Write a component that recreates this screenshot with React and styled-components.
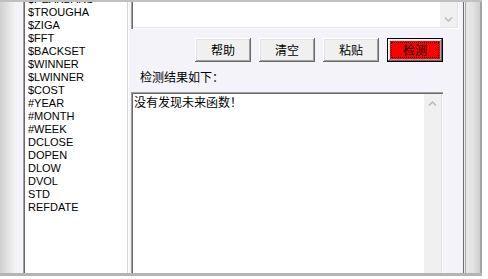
import React from "react";
import styled, { createGlobalStyle } from "styled-components";

const Global = createGlobalStyle`
  html, body { margin: 0; padding: 0; background: #fff; }
  body { width: 488px; height: 279px; overflow: hidden; }
`;

const Page = styled.div`
  position: relative;
  width: 488px;
  height: 279px;
  background: #fff;
  overflow: hidden;
  font-family: "Liberation Sans", "Noto Sans CJK SC", sans-serif;
`;

const Window = styled.div`
  width: 482px;
  height: 276px;
  display: flex;
  flex-direction: column;
`;

const TopEdge = styled.div`
  flex: none;
  height: 2px;
  background: #c0c0c0;
`;

const BottomEdge = styled.div`
  flex: none;
  height: 3px;
  background: #b4b4b4;
`;

const Body = styled.div`
  flex: 1;
  min-height: 0;
  display: flex;
  overflow: hidden;
`;

const Gutter = styled.div`
  flex: none;
  width: 15px;
  background: linear-gradient(to right, #d0d0d0, #f3f3f3);
`;

const Strip = styled.div`
  flex: none;
  width: 8px;
  background: #f5f3fa;
`;

const List = styled.div`
  flex: none;
  width: 106px;
  box-sizing: border-box;
  padding-left: 5px;
  background: #fff;
  overflow: hidden;
  box-shadow: inset 1px 0 #a0a0a0, inset 2px 0 #696969, inset -1px 0 #fff,
    inset -2px 0 #d8d8d8;
`;

const Items = styled.ul`
  list-style: none;
  margin: -9px 0 0;
  padding: 0;
`;

const Item = styled.li`
  height: 13px;
  line-height: 13px;
  font-size: 11px;
  color: #000;
  white-space: nowrap;
`;

const Panel = styled.div`
  flex: 1;
  min-width: 0;
  display: flex;
  flex-direction: column;
  background: #f5f3fa;
`;

const TopBox = styled.div`
  flex: none;
  margin-left: 2px;
  width: 328px;
  height: 27px;
  box-sizing: border-box;
  padding: 0 2px 2px 2px;
  display: flex;
  justify-content: flex-end;
  background: #fff;
  box-shadow: inset 1px 0 #a0a0a0, inset 2px 0 #696969, inset -1px -1px #fff,
    inset -2px -2px #e3e3e3;
`;

const ScrollBar = styled.div`
  flex: none;
  width: 17px;
  display: flex;
  flex-direction: column;
  justify-content: ${(p) => (p.$down ? "flex-end" : "flex-start")};
  background: #f0f0f0;
`;

const Arrow = styled.div`
  flex: none;
  height: ${(p) => p.$h}px;
  display: flex;
  align-items: center;
  justify-content: center;
`;

const ButtonRow = styled.div`
  flex: none;
  display: flex;
  justify-content: flex-end;
  gap: 8px;
  margin-top: 9px;
  padding-right: 20px;
`;

const Button = styled.button`
  position: relative;
  width: 56px;
  height: 24px;
  box-sizing: border-box;
  padding: 0;
  border: ${(p) => (p.$default ? "1px solid #000" : "none")};
  background: ${(p) => (p.$danger ? "#ff0000" : "#f0f0f0")};
  box-shadow: inset -1px -1px #696969, inset 1px 1px #fff,
    inset -2px -2px #a0a0a0, inset 2px 2px #e3e3e3;
  font-family: "Noto Sans CJK SC", sans-serif;
  font-size: 12px;
  line-height: 14px;
  color: #000;
  &::after {
    content: "";
    display: ${(p) => (p.$default ? "block" : "none")};
    position: absolute;
    inset: 3px;
    border: 1px dotted #000;
  }
`;

const Label = styled.div`
  flex: none;
  margin-top: 8px;
  padding-left: 11px;
  height: 14px;
  line-height: 14px;
  font-family: "Noto Sans CJK SC", sans-serif;
  font-size: 12px;
  color: #000;
`;

const ResultBox = styled.div`
  flex: 1;
  min-height: 0;
  margin-top: 8px;
  margin-left: 2px;
  width: 312px;
  box-sizing: border-box;
  padding: 2px 2px 0 2px;
  display: flex;
  background: #fff;
  box-shadow: inset 1px 1px #a0a0a0, inset 2px 2px #696969, inset -1px 0 #fff,
    inset -2px 0 #e3e3e3;
`;

const ResultText = styled.div`
  flex: 1;
  padding: 1px 0 0 1px;
  font-family: "Noto Sans CJK SC", sans-serif;
  font-size: 12px;
  line-height: 14px;
  color: #000;
`;

const RightFrame = styled.div`
  flex: none;
  width: 19px;
  background: linear-gradient(
    to right,
    #6d6d6d 0 1px,
    #eeeeee 1px 2px,
    #a8a8a8 2px 3px,
    #e8e8e8 3px,
    #e2e2e2 10px,
    #cfcfcf 17px,
    #a4a4a4 17px 19px
  );
`;

const Watermark = styled.div`
  position: absolute;
  left: ${(p) => p.$x}px;
  top: ${(p) => p.$y}px;
  white-space: nowrap;
  pointer-events: none;
  font-family: "Noto Sans CJK SC", sans-serif;
  font-weight: bold;
  font-size: 22px;
  line-height: 30px;
  letter-spacing: 1px;
  color: rgba(0, 0, 0, 0.025);
`;

const Chevron = ({ up }) => (
  <svg width="9" height="5" viewBox="0 0 9 5">
    <polyline
      points={up ? "1,4.5 4.5,1 8,4.5" : "1,0.5 4.5,4 8,0.5"}
      fill="none"
      stroke="#bcbcbc"
      strokeWidth="1.6"
    />
  </svg>
);

const items = [
  "$PEAKBARS",
  "$TROUGHA",
  "$ZIGA",
  "$FFT",
  "$BACKSET",
  "$WINNER",
  "$LWINNER",
  "$COST",
  "#YEAR",
  "#MONTH",
  "#WEEK",
  "DCLOSE",
  "DOPEN",
  "DLOW",
  "DVOL",
  "STD",
  "REFDATE",
];

const wm = "分析家公式网www.70822.com\u3000分析家公式网www.70822.com";

export default function App() {
  return (
    <Page>
      <Global />
      <Window>
        <TopEdge />
        <Body>
          <Gutter />
          <Strip />
          <List>
            <Items>
              {items.map((t) => (
                <Item key={t}>{t}</Item>
              ))}
            </Items>
          </List>
          <Panel>
            <TopBox>
              <ScrollBar $down>
                <Arrow $h={15}>
                  <Chevron />
                </Arrow>
              </ScrollBar>
            </TopBox>
            <ButtonRow>
              <Button>帮助</Button>
              <Button>清空</Button>
              <Button>粘贴</Button>
              <Button $default $danger>
                检测
              </Button>
            </ButtonRow>
            <Label>检测结果如下：</Label>
            <ResultBox>
              <ResultText>没有发现未来函数！</ResultText>
              <ScrollBar>
                <Arrow $h={19}>
                  <Chevron up />
                </Arrow>
              </ScrollBar>
            </ResultBox>
          </Panel>
          <RightFrame />
        </Body>
        <BottomEdge />
      </Window>
      <Watermark $x={13} $y={48}>{wm}</Watermark>
      <Watermark $x={-11} $y={135}>{wm}</Watermark>
      <Watermark $x={-11} $y={214}>{wm}</Watermark>
    </Page>
  );
}
